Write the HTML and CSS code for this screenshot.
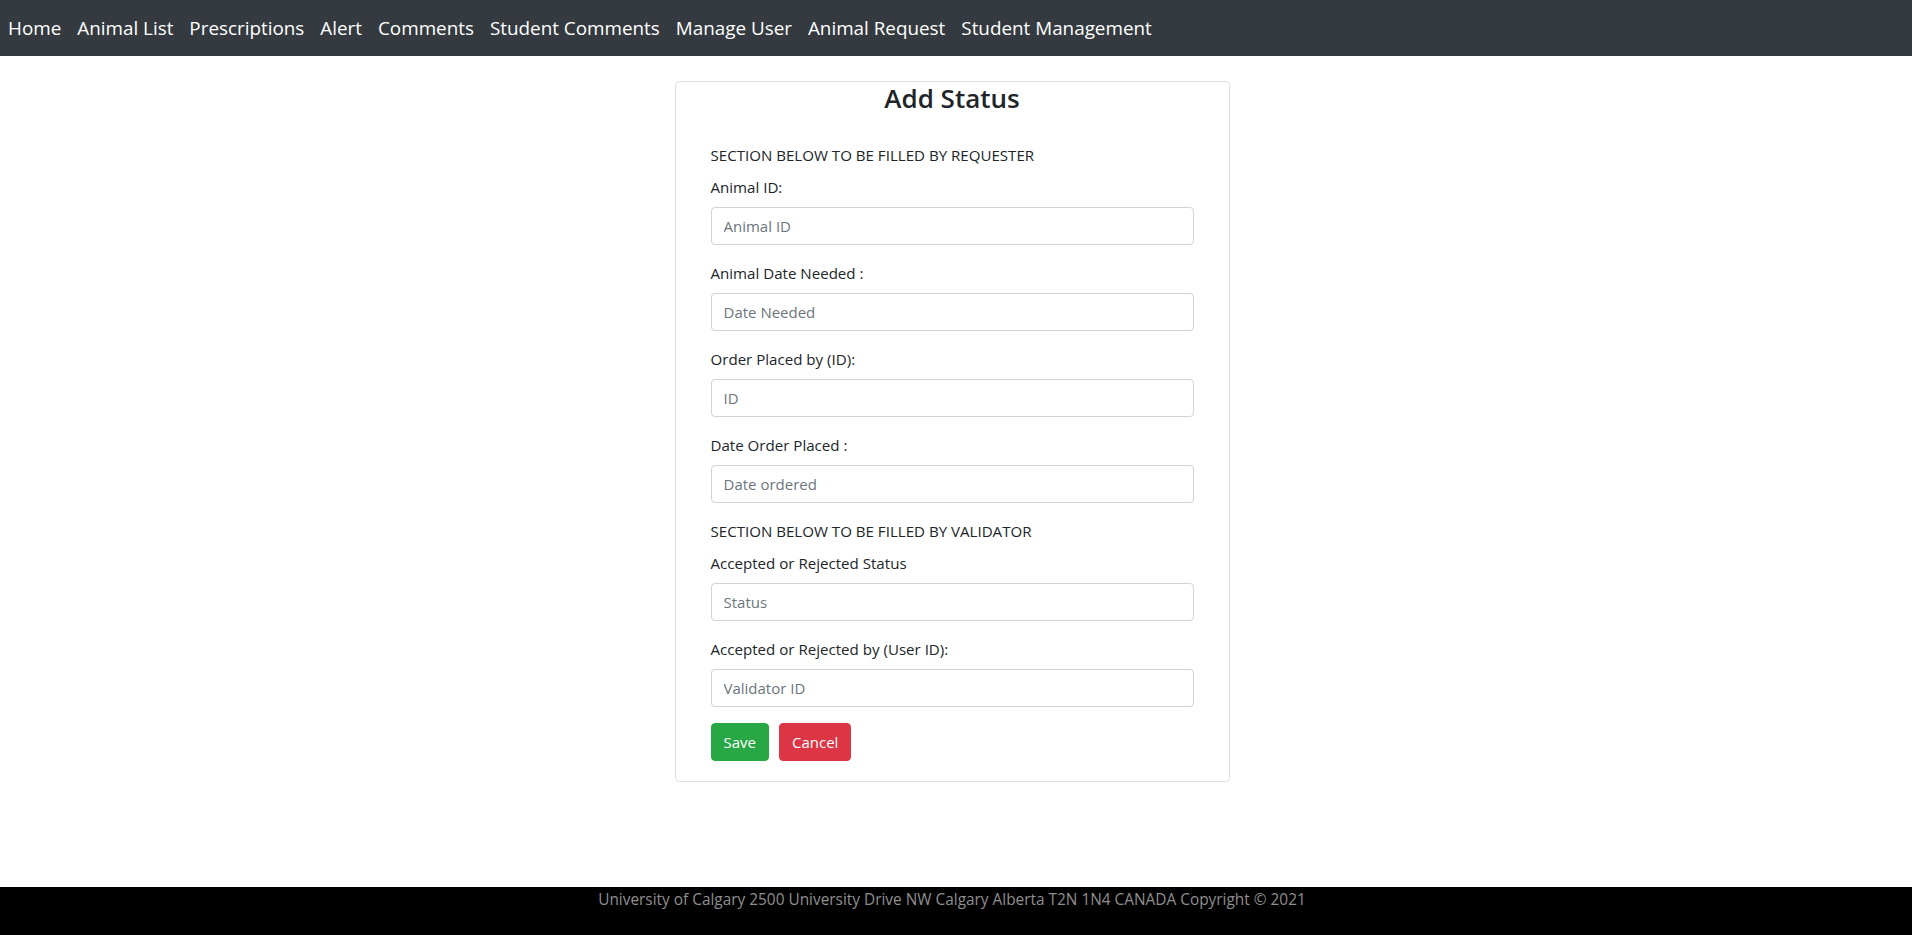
FILE: index.html
```html
<!DOCTYPE html>
<html lang="en">
<head>
<meta charset="utf-8">
<title>Add Status</title>
<link rel="stylesheet" href="styles.css">
</head>
<body>
<nav class="navbar">
  <ul class="nav-list">
    <li><a class="nav-link" href="#">Home</a></li>
    <li><a class="nav-link" href="#">Animal List</a></li>
    <li><a class="nav-link" href="#">Prescriptions</a></li>
    <li><a class="nav-link" href="#">Alert</a></li>
    <li><a class="nav-link" href="#">Comments</a></li>
    <li><a class="nav-link" href="#">Student Comments</a></li>
    <li><a class="nav-link" href="#">Manage User</a></li>
    <li><a class="nav-link" href="#">Animal Request</a></li>
    <li><a class="nav-link" href="#">Student Management</a></li>
  </ul>
</nav>
<main class="page">
  <div class="card">
    <h3 class="card-title">Add Status</h3>
    <form class="status-form">
      <p class="section-note">SECTION BELOW TO BE FILLED BY REQUESTER</p>
      <div class="form-group">
        <label class="form-label">Animal ID:</label>
        <input class="form-control" type="text" placeholder="Animal ID">
      </div>
      <div class="form-group">
        <label class="form-label">Animal Date Needed :</label>
        <input class="form-control" type="text" placeholder="Date Needed">
      </div>
      <div class="form-group">
        <label class="form-label">Order Placed by (ID):</label>
        <input class="form-control" type="text" placeholder="ID">
      </div>
      <div class="form-group">
        <label class="form-label">Date Order Placed :</label>
        <input class="form-control" type="text" placeholder="Date ordered">
      </div>
      <p class="section-note">SECTION BELOW TO BE FILLED BY VALIDATOR</p>
      <div class="form-group">
        <label class="form-label">Accepted or Rejected Status</label>
        <input class="form-control" type="text" placeholder="Status">
      </div>
      <div class="form-group">
        <label class="form-label">Accepted or Rejected by (User ID):</label>
        <input class="form-control" type="text" placeholder="Validator ID">
      </div>
      <div class="actions">
        <button class="btn btn-save" type="button">Save</button>
        <button class="btn btn-cancel" type="button">Cancel</button>
      </div>
    </form>
  </div>
</main>
<footer class="footer">University of Calgary 2500 University Drive NW Calgary Alberta T2N 1N4 CANADA Copyright © 2021</footer>
</body>
</html>
```
FILE: styles.css
```css
* { box-sizing: border-box; }
html, body { margin: 0; padding: 0; }
body {
  font-family: "Open Sans", "Noto Sans", "Liberation Sans", sans-serif;
  font-size: 16px;
  line-height: 1.5;
  color: #212529;
  background: #fff;
  min-height: 100vh;
  display: flex;
  flex-direction: column;
}
.navbar {
  background: #343a40;
  height: 56px;
  display: flex;
  align-items: center;
}
.nav-list {
  list-style: none;
  margin: 0;
  padding: 0;
  display: flex;
}
.nav-link {
  display: block;
  padding: 0 8px;
  color: #fff;
  text-decoration: none;
  font-size: 18.85px;
  line-height: 30px;
}
.page {
  flex: 1;
  display: flex;
  justify-content: center;
  align-items: flex-start;
  padding-right: 8px;
}
.card {
  width: 555px;
  margin-top: 25px;
  border: 1px solid rgba(0,0,0,.125);
  border-radius: 4px;
  padding: 1px 35px 20px;
}
.card-title {
  margin: 0 0 29px;
  text-align: center;
  font-size: 26px;
  font-weight: 600;
  line-height: 1.2;
}
.status-form { margin: 0; }
.section-note {
  margin: 0 0 8px;
  font-size: 15.1px;
  line-height: 24px;
}
.form-group { margin-bottom: 16px; }
.form-label {
  display: block;
  margin-bottom: 8px;
  font-size: 15.1px;
  line-height: 24px;
}
.form-control {
  display: block;
  width: 100%;
  height: 38px;
  padding: 6px 12px;
  font-family: inherit;
  font-size: 15px;
  line-height: 24px;
  color: #495057;
  background: #fff;
  border: 1px solid #ced4da;
  border-radius: 4px;
}
.form-control::placeholder { color: #6c757d; opacity: 1; }
.actions { display: flex; gap: 10px; }
.btn {
  height: 38px;
  padding: 6px 12px;
  font-family: inherit;
  font-size: 15px;
  line-height: 24px;
  color: #fff;
  border: 1px solid transparent;
  border-radius: 4px;
}
.btn-save { background: #28a745; border-color: #28a745; }
.btn-cancel { background: #dc3545; border-color: #dc3545; }
.footer {
  height: 48px;
  background: #000;
  color: #8f8f8f;
  text-align: center;
  padding: 1px 8px 0 0;
  font-size: 15.4px;
  line-height: 24px;
}
```
